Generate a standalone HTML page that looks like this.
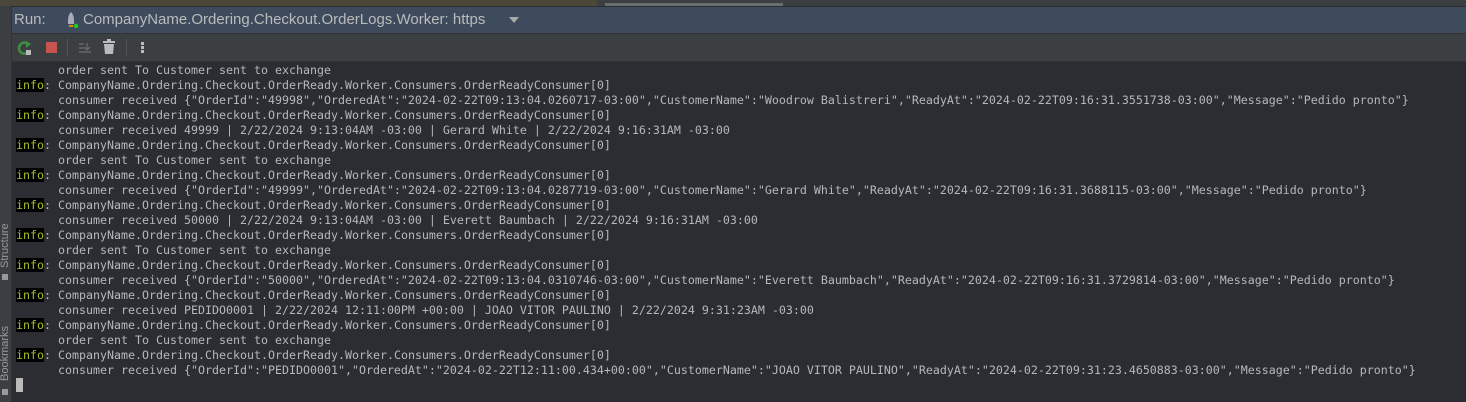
<!DOCTYPE html>
<html><head><style>
body{margin:0;width:1466px;height:402px;overflow:hidden;background:#2b2d33;position:relative;font-family:"DejaVu Sans Mono","Liberation Mono",monospace}
.top{position:absolute;left:0;top:0;width:1466px;height:6px;background:#3c3f41}
.top .ed{position:absolute;left:0;top:0;width:597px;height:6px;background:#4b4739}
.top .sb{position:absolute;left:605px;top:3px;width:178px;height:3px;background:#6b6e70}
.hdr{position:absolute;left:12px;top:7px;width:1454px;height:26px;background:#3d4b5c;border-bottom:1px solid #323232;font-family:"Liberation Sans",sans-serif;font-size:15px;color:#bbbbbb}
.tb{position:absolute;left:12px;top:34px;width:1454px;height:27px;background:#3c3f41;border-bottom:1px solid #333}
.side{position:absolute;left:0;top:6px;width:11px;height:396px;background:#3c3f41;border-right:1px solid #323232}
.con{position:absolute;left:16px;top:63px;font-size:11.64px;line-height:15px;color:#b4b8bf;white-space:pre}
.i{background:#000;color:#a8c023}
.vt{position:absolute;transform:rotate(-90deg);transform-origin:left top;font-family:"Liberation Sans",sans-serif;font-size:11px;color:#999;white-space:nowrap}
</style></head><body>
<div class="top"><div class="ed"></div><div class="sb"></div></div>
<div class="side">
<div class="vt" style="left:-1px;top:262px">Structure</div>
<div style="position:absolute;left:2px;top:268px;width:6px;height:6px;background:#999"></div>
<div class="vt" style="left:-1px;top:375px">Bookmarks</div>
<div style="position:absolute;left:2px;top:383px;width:6px;height:6px;background:#999"></div>
</div>
<div class="hdr">
<span style="position:absolute;left:2px;top:4px">Run:</span>
<svg style="position:absolute;left:53px;top:4px" width="14" height="18" viewBox="0 0 14 18"><path d="M6 1 Q9 4 9 9 L9 13 L3 13 L3 9 Q3 4 6 1Z" fill="#aab"/><rect x="4" y="14" width="4" height="2" fill="#d80"/><circle cx="11" cy="15" r="2.2" fill="#2c2"/></svg>
<span style="position:absolute;left:71px;top:4px">CompanyName.Ordering.Checkout.OrderLogs.Worker: https</span>
<svg style="position:absolute;left:497px;top:10px" width="10" height="7"><path d="M0 0H10L5 6Z" fill="#aaa"/></svg>
</div>
<div class="tb">
<svg style="position:absolute;left:5px;top:6px" width="16" height="16" viewBox="0 0 16 16"><path d="M12 5A5.5 5.5 0 1 0 10 13" stroke="#3f9142" stroke-width="2.4" fill="none"/><path d="M9 1L14 4 9 8Z" fill="#3f9142"/><rect x="9" y="10" width="5" height="5" fill="#bbb"/></svg>
<div style="position:absolute;left:34px;top:8px;width:11px;height:11px;background:#c75450"></div>
<div style="position:absolute;left:55px;top:5px;width:1px;height:17px;background:#555"></div>
<svg style="position:absolute;left:66px;top:6px" width="14" height="14"><path d="M1 4H6M1 8H6M1 12H13M9 3V9M6 7L9 10 12 7" stroke="#666" stroke-width="1.5" fill="none"/></svg>
<svg style="position:absolute;left:91px;top:5px" width="12" height="15"><rect x="0" y="2" width="12" height="2" fill="#bbb"/><rect x="4" y="0" width="4" height="2" fill="#bbb"/><path d="M1 5H11L10 15H2Z" fill="#bbb"/></svg>
<div style="position:absolute;left:114px;top:5px;width:1px;height:17px;background:#555"></div>
<div style="position:absolute;left:129px;top:8px;width:3px;height:3px;background:#bbb;box-shadow:0 4px #bbb,0 8px #bbb"></div>
</div>
<div class="con">      order sent To Customer sent to exchange
<span class="i">info</span>: CompanyName.Ordering.Checkout.OrderReady.Worker.Consumers.OrderReadyConsumer[0]
      consumer received {"OrderId":"49998","OrderedAt":"2024-02-22T09:13:04.0260717-03:00","CustomerName":"Woodrow Balistreri","ReadyAt":"2024-02-22T09:16:31.3551738-03:00","Message":"Pedido pronto"}
<span class="i">info</span>: CompanyName.Ordering.Checkout.OrderReady.Worker.Consumers.OrderReadyConsumer[0]
      consumer received 49999 | 2/22/2024 9:13:04AM -03:00 | Gerard White | 2/22/2024 9:16:31AM -03:00
<span class="i">info</span>: CompanyName.Ordering.Checkout.OrderReady.Worker.Consumers.OrderReadyConsumer[0]
      order sent To Customer sent to exchange
<span class="i">info</span>: CompanyName.Ordering.Checkout.OrderReady.Worker.Consumers.OrderReadyConsumer[0]
      consumer received {"OrderId":"49999","OrderedAt":"2024-02-22T09:13:04.0287719-03:00","CustomerName":"Gerard White","ReadyAt":"2024-02-22T09:16:31.3688115-03:00","Message":"Pedido pronto"}
<span class="i">info</span>: CompanyName.Ordering.Checkout.OrderReady.Worker.Consumers.OrderReadyConsumer[0]
      consumer received 50000 | 2/22/2024 9:13:04AM -03:00 | Everett Baumbach | 2/22/2024 9:16:31AM -03:00
<span class="i">info</span>: CompanyName.Ordering.Checkout.OrderReady.Worker.Consumers.OrderReadyConsumer[0]
      order sent To Customer sent to exchange
<span class="i">info</span>: CompanyName.Ordering.Checkout.OrderReady.Worker.Consumers.OrderReadyConsumer[0]
      consumer received {"OrderId":"50000","OrderedAt":"2024-02-22T09:13:04.0310746-03:00","CustomerName":"Everett Baumbach","ReadyAt":"2024-02-22T09:16:31.3729814-03:00","Message":"Pedido pronto"}
<span class="i">info</span>: CompanyName.Ordering.Checkout.OrderReady.Worker.Consumers.OrderReadyConsumer[0]
      consumer received PEDIDO0001 | 2/22/2024 12:11:00PM +00:00 | JOAO VITOR PAULINO | 2/22/2024 9:31:23AM -03:00
<span class="i">info</span>: CompanyName.Ordering.Checkout.OrderReady.Worker.Consumers.OrderReadyConsumer[0]
      order sent To Customer sent to exchange
<span class="i">info</span>: CompanyName.Ordering.Checkout.OrderReady.Worker.Consumers.OrderReadyConsumer[0]
      consumer received {"OrderId":"PEDIDO0001","OrderedAt":"2024-02-22T12:11:00.434+00:00","CustomerName":"JOAO VITOR PAULINO","ReadyAt":"2024-02-22T09:31:23.4650883-03:00","Message":"Pedido pronto"}
<span style="display:inline-block;width:7px;height:14px;background:#bbb;vertical-align:top"></span></div>
</body></html>
